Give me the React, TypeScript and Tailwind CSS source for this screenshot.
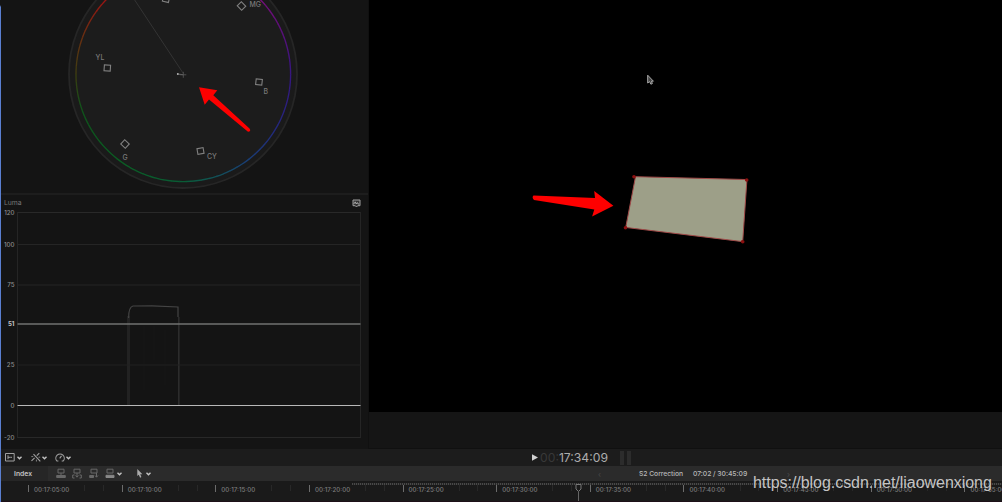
import type { ReactNode } from 'react';

const HUES: [number, number[]][] = [
  [0, [54, 22, 128]],
  [30, [36, 40, 124]],
  [55, [26, 64, 116]],
  [75, [18, 84, 84]],
  [90, [10, 92, 54]],
  [125, [12, 92, 36]],
  [160, [16, 82, 28]],
  [178, [56, 62, 18]],
  [200, [104, 48, 18]],
  [225, [156, 20, 20]],
  [270, [150, 16, 70]],
  [310, [124, 16, 122]],
  [335, [92, 16, 120]],
  [360, [54, 22, 128]],
];

const TARGETS = [
  { label: '', x: 166, y: -1, rot: 12, tx: 0, ty: 0 },
  { label: 'MG', x: 241.5, y: 6, rot: 45, tx: 249.5, ty: 6.7 },
  { label: 'YL', x: 107.3, y: 68, rot: 4, tx: 95.6, ty: 59.5 },
  { label: 'B', x: 259, y: 82, rot: 6, tx: 263.6, ty: 94 },
  { label: 'G', x: 125, y: 144, rot: 43, tx: 122.6, ty: 159.5 },
  { label: 'CY', x: 200.5, y: 151, rot: -10, tx: 207, ty: 159 },
];

const LEVELS = [
  { label: '120', y: 212.5, color: '#292929' },
  { label: '100', y: 244.5, color: '#252525' },
  { label: '75', y: 285, color: '#252525' },
  { label: '51', y: 324, color: '#707270' },
  { label: '25', y: 365, color: '#202020' },
  { label: '0', y: 405.5, color: '#b8b8b8' },
  { label: '-20', y: 437.5, color: '#282828' },
];

const TIMES = [
  '00:17:05:00',
  '00:17:10:00',
  '00:17:15:00',
  '00:17:20:00',
  '00:17:25:00',
  '00:17:30:00',
  '00:17:35:00',
  '00:17:40:00',
  '00:17:45:00',
  '00:17:50:00',
  '00:17:55:00',
];

function hueAt(deg: number) {
  const i = HUES.findIndex(([d]) => d > deg);
  const [d0, a] = HUES[i - 1];
  const [d1, b] = HUES[i];
  const t = (deg - d0) / (d1 - d0);
  return `rgb(${a.map((v, k) => Math.round(v + (b[k] - v) * t)).join(',')})`;
}

function HueRing({ cx, cy, r }: { cx: number; cy: number; r: number }) {
  const point = (deg: number) => {
    const a = (deg * Math.PI) / 180;
    return `${(cx + r * Math.cos(a)).toFixed(2)} ${(cy + r * Math.sin(a)).toFixed(2)}`;
  };
  return (
    <g fill="none" strokeWidth="1.4">
      {Array.from({ length: 90 }, (_, i) => i * 4).map((deg) => (
        <path key={deg} d={`M${point(deg)}A${r} ${r} 0 0 1 ${point(deg + 4.2)}`} stroke={hueAt(deg + 2)} />
      ))}
    </g>
  );
}

function Vectorscope() {
  return (
    <svg width="367" height="193" viewBox="1 0 367 193" className="block shrink-0">
      <circle cx="183" cy="74" r="114" fill="#1a1a1a" stroke="#262626" strokeWidth="1.8" />
      <circle cx="183.3" cy="74" r="107" fill="#1c1c1c" />
      <HueRing cx={183.3} cy={74.3} r={107.3} />
      <path d="M134 -1L183 73" stroke="#343434" strokeWidth="1" />
      <path d="M177.5 74L183 74.7" stroke="#777" strokeWidth="0.8" />
      <path d="M180.3 74.8H186.3M183.3 71.8V77.8" stroke="#5c5c5c" strokeWidth="0.8" />
      <circle cx="177.8" cy="74" r="0.9" fill="#b5b5b5" />
      {TARGETS.map((t) => (
        <g key={t.label + t.x}>
          <rect
            x={t.x - 3.1}
            y={t.y - 2.9}
            width="6.2"
            height="5.8"
            fill="none"
            stroke="#808080"
            strokeWidth="1.1"
            transform={`rotate(${t.rot} ${t.x} ${t.y})`}
          />
          <text x={t.tx} y={t.ty} fill="#7a7a7a" className="font-['Inter',sans-serif] text-[6.9px] font-medium">
            {t.label}
          </text>
        </g>
      ))}
    </svg>
  );
}

function LumaChart() {
  return (
    <svg width="367" height="239" viewBox="1 210 367 239" className="block shrink-0">
      <path d="M17.5 212V438M360.5 212V438" stroke="#252525" />
      <path d="M128.5 405V316" fill="none" stroke="#222" strokeWidth="3" />
      <path d="M128.6 318Q128.6 307 133 306L152 305.8L178 307V317" fill="none" stroke="#444" strokeWidth="1.2" />
      <path d="M178.8 317V405" stroke="#2c2c2c" strokeWidth="1.6" />
      <path d="M144 326V390M154 326V360M165 330V385" stroke="#171717" />
      {LEVELS.map((l) => (
        <g key={l.label}>
          <path d={`M17.5 ${l.y}H360.5`} stroke={l.color} strokeWidth={l.label === '51' ? 1.6 : 1.2} />
          <text
            x="14.5"
            y={l.y + 2.4}
            textAnchor="end"
            fill={l.label === '51' ? '#c4c4c4' : '#8c8c8c'}
            fontWeight={l.label === '51' ? 700 : 500}
            className="font-['Inter',sans-serif] text-[6.2px]"
          >
            {l.label}
          </text>
        </g>
      ))}
    </svg>
  );
}

function Scopes() {
  return (
    <div className="flex w-[368px] shrink-0 flex-col border-r border-[#101010] bg-[#141414]">
      <Vectorscope />
      <div className="h-[2px] shrink-0 bg-[#1d1d1d]" />
      <div className="flex h-[15px] shrink-0 items-center justify-between pt-[2px] pr-[7px] pl-[3px] text-[6.8px] text-[#777]">
        <span>Luma</span>
        <svg width="9" height="9" viewBox="0 0 9 9" fill="none" className="mb-px">
          <path d="M1 1H8V6.7H5.7L4.5 8L3.3 6.7H1Z" fill="#333" stroke="#a0a0a0" />
          <path d="M1.8 5L3.2 2.8L4.2 5L5.3 3.5L6 5H7.2" stroke="#bbb" strokeWidth="0.8" />
        </svg>
      </div>
      <LumaChart />
    </div>
  );
}

function Viewer() {
  return (
    <div className="flex flex-1 flex-col border-b border-[#101010] bg-[#151515]">
      <svg width="633" height="412" viewBox="369 0 633 412" className="block shrink-0 bg-black">
        <path
          d="M635.5 176.7L745.5 179.5L746.8 181.5L742.8 240L741 241.4L627 227.6L626 226Z"
          transform="translate(0 0)"
          fill="#9d9f88"
          stroke="#a04a48"
          strokeWidth="1"
          strokeLinejoin="round"
        />
        <g fill="#8c1010">
          <circle cx="634" cy="176.7" r="1.8" />
          <circle cx="746.7" cy="180" r="1.8" />
          <circle cx="742.7" cy="241.8" r="1.8" />
          <circle cx="625.5" cy="227.7" r="1.8" />
        </g>
        <path
          d="M647.7 75.2V83L649.6 81.6L650.9 84.2L652.4 83.5L651.4 81.2H653.4Z"
          fill="#444"
          stroke="#aaa"
          strokeWidth="1"
        />
      </svg>
    </div>
  );
}

function Chevron() {
  return (
    <svg width="5" height="4" viewBox="0 0 5 4" fill="none" stroke="#c4c4c4" strokeWidth="1.4">
      <path d="M0.5 0.7L2.5 2.7L4.5 0.7" />
    </svg>
  );
}

function Icon({ width, children }: { width: number; children: ReactNode }) {
  return (
    <svg width={width} height="11" viewBox={`0 0 ${width} 11`} fill="none" stroke="currentColor">
      {children}
    </svg>
  );
}

function Transport() {
  return (
    <div className="flex h-[17px] shrink-0 items-center bg-[#1c1c1c] text-[#a0a0a0]">
      <div className="flex w-[531px] items-center pl-1">
        <Icon width={10}>
          <path d="M0.5 1.5H9.2V9H0.5Z" />
          <path d="M3 3.3V7.2M3 5.3H5.5M5.5 5.3H7" />
        </Icon>
        <span className="ml-[2px]"><Chevron /></span>
        <span className="ml-[9px]">
          <Icon width={10}>
            <path d="M2.5 2.2L9.3 9.3M0.5 8.8L3.6 5.8M5.8 3.7L8.3 1.2" strokeWidth="1.1" />
            <path d="M0.3 4.6H2.2M5.4 7.6V9.5M7.5 5.2H9.2" strokeWidth="0.8" />
          </Icon>
        </span>
        <span className="ml-px"><Chevron /></span>
        <span className="ml-[8px]">
          <Icon width={10}>
            <path d="M3.4 9H1.9A4.2 4.2 0 1 1 8.2 9H6.7M4.7 6.4L6.5 3.9" strokeWidth="1.1" />
          </Icon>
        </span>
        <span className="ml-px"><Chevron /></span>
      </div>
      <svg width="6" height="7" viewBox="0 0 6 7" fill="#d0d0d0">
        <path d="M0 0.2L6 3.5L0 6.8Z" />
      </svg>
      <div className="ml-[2px] w-[67px] pt-px text-[12.2px] leading-none whitespace-nowrap text-[#adadad]">
        <span className="text-[#383838]">00:</span>17:34:09
      </div>
      <div className="ml-[13px] flex gap-[3px]">
        <div className="h-[14px] w-1 bg-[#2c2c2c]" />
        <div className="h-[14px] w-1 bg-[#2c2c2c]" />
      </div>
    </div>
  );
}

function Toolbar() {
  return (
    <div className="flex h-[15px] shrink-0 items-center bg-[#2b2b2b] text-[#686868]">
      <div className="flex h-full w-[47px] items-center bg-[#262626] pt-[2px] pl-[13px] text-[6.8px] font-semibold text-[#c4c4c4]">
        Index
      </div>
      <div className="flex w-[550px] items-center pl-[8px]">
        <div className="flex gap-[6.4px]">
          <Icon width={10}>
            <path d="M2 1.2H8V5H2ZM5 5V7" />
            <path d="M0.7 7.5H9.3V9.5H0.7Z" fill="currentColor" />
          </Icon>
          <Icon width={10}>
            <path d="M2 1.2H8V5H2ZM5 5V9M3.5 7.5L5 9.2L6.5 7.5M2.5 7H0.7V10H2.5M7.5 7H9.3V10H7.5" />
          </Icon>
          <Icon width={10}>
            <path d="M2 1.2H8V5H2ZM7.5 5V9M6 7.5L7.5 9.2L9 7.5" />
            <path d="M0.7 7.5H4.5V9.5H0.7Z" fill="currentColor" />
          </Icon>
          <Icon width={10}>
            <path d="M2 1.2H8V5H2Z" />
            <path d="M1 7.3H9V9.5H1Z" fill="#888" stroke="#888" />
          </Icon>
        </div>
        <span className="ml-[2px]"><Chevron /></span>
        <svg width="6" height="9" viewBox="0 0 6 9" fill="#aaa" className="ml-[15px]">
          <path d="M0.3 0V7L1.8 5.8L3.1 8.7L4.4 8.1L3.2 5.3H5.4Z" />
        </svg>
        <span className="ml-[3px]"><Chevron /></span>
      </div>
      <div className="w-[41px] text-[8px] leading-none text-[#484848]">‹</div>
      <div className="w-[54px] pt-[2px] text-[6.75px] font-medium tracking-[-0.04px] whitespace-nowrap text-[#b8b8b8]">
        S2 Correction
      </div>
      <div className="w-[94px] pt-[2px] text-[6.8px] font-medium tracking-[-0.04px] whitespace-nowrap text-[#b8b8b8]">
        07:02 / 30:45:09
      </div>
      <div className="text-[8px] leading-none text-[#4c4c4c]">›</div>
    </div>
  );
}

function Ruler() {
  return (
    <div className="relative flex h-[21px] shrink-0 overflow-hidden border-b border-[#1d1018] bg-[#1a1a1a] pl-[27px]">
      <div className="absolute top-[2px] left-[351px] h-[2px] w-[650px] bg-[repeating-linear-gradient(90deg,#484848_0px,#484848_1px,#242424_1px,#242424_2px)]" />
      {TIMES.map((time) => (
        <div key={time} className="flex w-[93.65px] shrink-0 pt-[4px]">
          <div className="h-[7px] w-px shrink-0 bg-[#6c6c6c]" />
          <div className="w-[55.2px] shrink-0 pt-px pl-[5px] text-[6.2px] leading-[7px] font-medium whitespace-nowrap text-[#7c7c7c]">
            {time}
          </div>
          <div className="h-[6px] w-px shrink-0 bg-[#282828]" />
          <div className="ml-[17.7px] h-[6px] w-px shrink-0 bg-[#282828]" />
        </div>
      ))}
      <svg width="7" height="19" viewBox="0 0 7 19" fill="none" className="absolute top-[2px] left-[574px]">
        <path d="M1 1.5H6V6L3.5 8.5L1 6Z" fill="#1a1a1a" stroke="#777" />
        <path d="M3.5 8.5V19" stroke="#666" />
      </svg>
    </div>
  );
}

function Arrows() {
  return (
    <svg width="1002" height="502" className="pointer-events-none absolute inset-0" fill="#fe0000">
      <path d="M199 87.3L217.3 90.3L213.3 95.3L249.5 128.5Q251.5 131.5 248 131.8L209 99.5L204.7 104.7Z" />
      <path d="M533.5 195.6L595 198L594.2 191.1L613.4 205.8L592.1 216.5L594.3 209.5L534 200Q531.5 197.5 533.5 195.6Z" />
    </svg>
  );
}

export default function App() {
  return (
    <div className="relative flex h-[502px] w-[1002px] overflow-hidden bg-[#141414] font-['Inter',sans-serif]">
      <div className="w-px shrink-0 bg-linear-to-b from-[#141414] from-[5px] to-[#5a7fd0] to-[7px]" />
      <div className="flex w-[1001px] flex-col">
        <div className="flex h-[449px] shrink-0">
          <Scopes />
          <Viewer />
        </div>
        <Transport />
        <Toolbar />
        <Ruler />
      </div>
      <Arrows />
      <div className="absolute top-[473px] left-[753px] font-['Liberation_Sans',sans-serif] text-[16px] leading-[20px] tracking-[-0.04px] whitespace-nowrap text-[#c4c4c4]">
        https://blog.csdn.net/liaowenxiong
      </div>
    </div>
  );
}
